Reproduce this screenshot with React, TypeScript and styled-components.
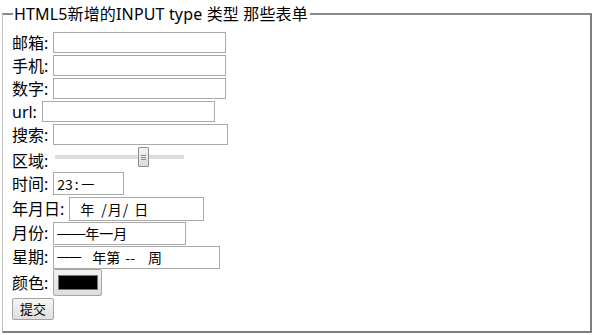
import React from "react";
import styled, { createGlobalStyle } from "styled-components";

const Global = createGlobalStyle`
  html, body { margin: 0; padding: 0; background: #fff; }
  body {
    font-family: "Noto Sans", "Noto Sans CJK SC", sans-serif;
    font-size: 16px;
    color: #000;
  }
`;

const Fieldset = styled.fieldset`
  box-sizing: border-box;
  width: 590px;
  height: 330px;
  margin: 3px 0 0 2px;
  padding: 0 0 0 9px;
  border-top: 2px solid #8a8a8a;
  border-left: 1px solid #c4c4c4;
  border-right: 2px solid #7f7f7f;
  border-bottom: 2px solid #7f7f7f;
  border-radius: 0;
`;

const Legend = styled.legend`
  padding: 0 2px 0 1px;
  font-size: 16px;
  line-height: 22px;
  letter-spacing: 0.15px;
  font-family: "Noto Sans", "Noto Sans CJK SC", sans-serif;
  margin-left: 1px;
`;

const Rows = styled.div`
  display: flex;
  flex-direction: column;
  padding-top: 6px;
`;

const Row = styled.div<{ $h: number; $align?: string }>`
  display: flex;
  align-items: ${(p) => p.$align || "center"};
  height: ${(p) => p.$h}px;
  gap: 5px;
`;

const Label = styled.span`
  font-family: "Noto Sans", "Noto Sans CJK SC", sans-serif;
  font-size: 16px;
  line-height: 20px;
  white-space: nowrap;
`;

const TextBox = styled.div<{ $w: number; $h?: number }>`
  box-sizing: border-box;
  width: ${(p) => p.$w}px;
  height: ${(p) => p.$h || 21}px;
  border: 1px solid #a9a9a9;
  background: #fff;
  display: flex;
  align-items: center;
  padding-left: 3px;
  font-family: "Noto Sans CJK SC", sans-serif;
  font-size: 14px;
  line-height: 18px;
  white-space: pre;
  color: #000;
`;

const Seg = styled.span<{ $ml?: number }>`
  margin-left: ${(p) => p.$ml || 0}px;
`;

const Dash = styled.span<{ $ml?: number; $size?: number }>`
  margin-left: ${(p) => p.$ml || 0}px;
  font-family: "Liberation Sans", sans-serif;
  font-size: ${(p) => p.$size || 14}px;
`;

const Slider = styled.div`
  position: relative;
  width: 129px;
  height: 20px;
  margin: 0 0 4px 2px;
  display: flex;
  align-items: center;
`;

const Track = styled.div`
  width: 100%;
  height: 4px;
  background: #e1ded9;
`;

const Thumb = styled.div`
  position: absolute;
  left: 83px;
  top: 0;
  box-sizing: border-box;
  width: 11px;
  height: 20px;
  border: 1px solid #8c8c8c;
  border-radius: 1px;
  background: linear-gradient(#f2f2f2, #dcdcdc);
  display: flex;
  flex-direction: column;
  align-items: center;
  justify-content: center;
  gap: 1px;
`;

const Grip = styled.span`
  display: block;
  width: 5px;
  height: 1px;
  background: #8a8a8a;
`;

const ColorButton = styled.div`
  box-sizing: border-box;
  width: 49px;
  height: 27px;
  border: 1px solid #a6a6a6;
  border-radius: 2px;
  background: linear-gradient(#f2f2f2, #dddddd);
  display: flex;
  align-items: center;
  justify-content: center;
`;

const Swatch = styled.div`
  box-sizing: border-box;
  width: 40px;
  height: 15px;
  border: 1px solid #777;
  background: #000;
`;

const SubmitButton = styled.div`
  box-sizing: border-box;
  width: 42px;
  height: 22px;
  border: 1px solid #a3a3a3;
  border-radius: 2px;
  background: linear-gradient(#f6f6f6, #dedede);
  display: flex;
  align-items: center;
  justify-content: center;
  font-family: "Noto Sans CJK SC", sans-serif;
  font-size: 13px;
  line-height: 16px;
`;

export default function App() {
  return (
    <>
      <Global />
      <Fieldset>
        <Legend>HTML5新增的INPUT type 类型 那些表单</Legend>
        <Rows>
          <Row $h={23}>
            <Label>邮箱:</Label>
            <TextBox $w={173} />
          </Row>
          <Row $h={23}>
            <Label>手机:</Label>
            <TextBox $w={173} />
          </Row>
          <Row $h={23}>
            <Label>数字:</Label>
            <TextBox $w={173} />
          </Row>
          <Row $h={23}>
            <Label>url:</Label>
            <TextBox $w={173} />
          </Row>
          <Row $h={23}>
            <Label>搜索:</Label>
            <TextBox $w={175} />
          </Row>
          <Row $h={25} $align="flex-end">
            <Label>区域:</Label>
            <Slider>
              <Track />
              <Thumb>
                <Grip />
                <Grip />
                <Grip />
              </Thumb>
            </Slider>
          </Row>
          <Row $h={25}>
            <Label>时间:</Label>
            <TextBox $w={71} $h={23}>
              <Seg>23</Seg>
              <Seg $ml={2}>:</Seg>
              <Dash $ml={3} $size={12}>—</Dash>
            </TextBox>
          </Row>
          <Row $h={25}>
            <Label>年月日:</Label>
            <TextBox $w={135} $h={24}>
              <Seg $ml={7}>年</Seg>
              <Seg $ml={7}>/</Seg>
              <Seg $ml={1}>月</Seg>
              <Seg $ml={1}>/</Seg>
              <Seg $ml={6}>日</Seg>
            </TextBox>
          </Row>
          <Row $h={24}>
            <Label>月份:</Label>
            <TextBox $w={133} $h={23}>
              <Dash>——</Dash>
              <Seg>年一月</Seg>
            </TextBox>
          </Row>
          <Row $h={24}>
            <Label>星期:</Label>
            <TextBox $w={167} $h={23}>
              <Dash $size={12}>——</Dash>
              <Seg $ml={11}>年第</Seg>
              <Seg $ml={5}>--</Seg>
              <Seg $ml={13}>周</Seg>
            </TextBox>
          </Row>
          <Row $h={27}>
            <Label>颜色:</Label>
            <ColorButton>
              <Swatch />
            </ColorButton>
          </Row>
          <Row $h={24} $align="flex-end">
            <SubmitButton>提交</SubmitButton>
          </Row>
        </Rows>
      </Fieldset>
    </>
  );
}
